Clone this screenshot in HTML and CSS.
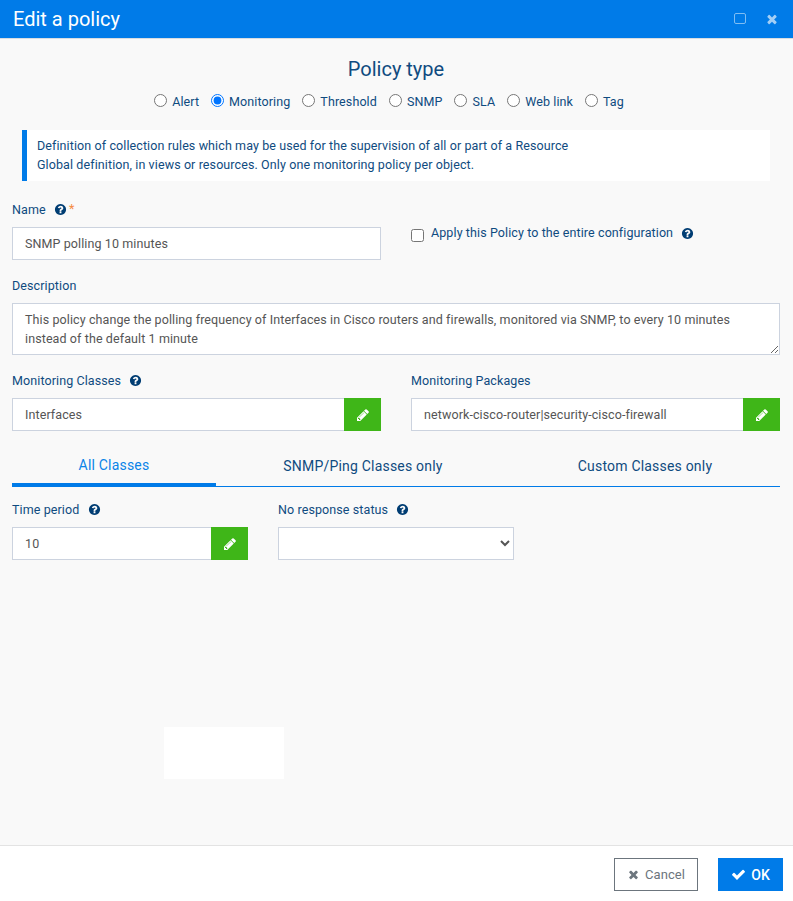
FILE: index.html
```html
<!DOCTYPE html>
<html lang="en">
<head>
  <meta charset="UTF-8">
  <meta name="viewport" content="width=device-width, initial-scale=1.0">
  <title>Edit a policy</title>
  <link rel="stylesheet" href="styles.css">
</head>
<body>
  <svg class="sprite" xmlns="http://www.w3.org/2000/svg">
    <symbol id="i-help" viewBox="0 0 1792 1792"><path d="M1024 1376v-192q0-14-9-23t-23-9h-192q-14 0-23 9t-9 23v192q0 14 9 23t23 9h192q14 0 23-9t9-23zm256-672q0-88-55.500-163t-138.500-116-170-41q-243 0-371 213-15 24 8 42l132 100q7 6 19 6 16 0 25-12 53-68 86-92 34-24 86-24 48 0 85.500 26t37.500 59q0 38-20 61t-68 45q-63 28-115.500 86.500t-52.500 125.500v36q0 14 9 23t23 9h192q14 0 23-9t9-23q0-19 21.500-49.500t54.500-49.500q32-18 49-28.500t46-35 44.500-48 28-60.500 12.500-81zm384 192q0 209-103 385.500t-279.500 279.500-385.500 103-385.500-103-279.500-279.500-103-385.500 103-385.500 279.500-279.500 385.500-103 385.500 103 279.500 279.500 103 385.500z"/></symbol>
    <symbol id="i-pencil" viewBox="0 0 1792 1792"><path d="M491 1536l91-91-235-235-91 91v107h128v128h107zm523-928q0-22-22-22-10 0-17 7l-542 542q-7 7-7 17 0 22 22 22 10 0 17-7l542-542q7-7 7-17zm-54-192l416 416-832 832h-416v-416zm683 96q0 53-37 90l-166 166-416-416 166-165q36-38 90-38 53 0 91 38l235 234q37 39 37 91z"/></symbol>
    <symbol id="i-times" viewBox="0 0 1792 1792"><path d="M1490 1322q0 40-28 68l-136 136q-28 28-68 28t-68-28l-294-294-294 294q-28 28-68 28t-68-28l-136-136q-28-28-28-68t28-68l294-294-294-294q-28-28-28-68t28-68l136-136q28-28 68-28t68 28l294 294 294-294q28-28 68-28t68 28l136 136q28 28 28 68t-28 68l-294 294 294 294q28 28 28 68z"/></symbol>
    <symbol id="i-check" viewBox="0 0 1792 1792"><path d="M1671 566q0 40-28 68l-724 724-136 136q-28 28-68 28t-68-28l-136-136-362-362q-28-28-28-68t28-68l136-136q28-28 68-28t68 28l294 295 656-657q28-28 68-28t68 28l136 136q28 28 28 68z"/></symbol>
  </svg>

  <div class="dialog">
    <div class="titlebar">
      <span class="titlebar-text">Edit a policy</span>
      <span class="titlebar-btns">
        <span class="btn-max"></span>
        <svg class="btn-close"><use href="#i-times"/></svg>
      </span>
    </div>

    <div class="content">
      <h2 class="type-title">Policy type</h2>
      <div class="type-row">
        <label class="type-opt"><input type="radio" name="type"> Alert</label>
        <label class="type-opt"><input type="radio" name="type" checked> Monitoring</label>
        <label class="type-opt"><input type="radio" name="type"> Threshold</label>
        <label class="type-opt"><input type="radio" name="type"> SNMP</label>
        <label class="type-opt"><input type="radio" name="type"> SLA</label>
        <label class="type-opt"><input type="radio" name="type"> Web link</label>
        <label class="type-opt"><input type="radio" name="type"> Tag</label>
      </div>

      <div class="notice">
        Definition of collection rules which may be used for the supervision of all or part of a Resource<br>
        Global definition, in views or resources. Only one monitoring policy per object.
      </div>

      <div class="row row-name">
        <div class="col">
          <div class="field-label">Name <svg class="help"><use href="#i-help"/></svg><span class="req">*</span></div>
          <input class="text-input" type="text" value="SNMP polling 10 minutes">
        </div>
        <div class="col apply">
          <input class="apply-check" type="checkbox">
          <span class="apply-text">Apply this Policy to the entire configuration</span>
          <svg class="help"><use href="#i-help"/></svg>
        </div>
      </div>

      <div class="field-label label-desc">Description</div>
      <textarea class="text-area">This policy change the polling frequency of Interfaces in Cisco routers and firewalls, monitored via SNMP, to every 10 minutes instead of the default 1 minute</textarea>

      <div class="row row-monitor">
        <div class="col">
          <div class="field-label">Monitoring Classes <svg class="help"><use href="#i-help"/></svg></div>
          <div class="input-group">
            <input class="text-input" type="text" value="Interfaces">
            <button class="edit-btn"><svg><use href="#i-pencil"/></svg></button>
          </div>
        </div>
        <div class="col">
          <div class="field-label">Monitoring Packages</div>
          <div class="input-group">
            <input class="text-input" type="text" value="network-cisco-router|security-cisco-firewall">
            <button class="edit-btn"><svg><use href="#i-pencil"/></svg></button>
          </div>
        </div>
      </div>

      <div class="tabs">
        <a class="tab active">All Classes</a>
        <a class="tab">SNMP/Ping Classes only</a>
        <a class="tab">Custom Classes only</a>
      </div>

      <div class="row-time">
        <div class="col-time">
          <div class="field-label">Time period <svg class="help"><use href="#i-help"/></svg></div>
          <div class="input-group">
            <input class="text-input" type="text" value="10">
            <button class="edit-btn"><svg><use href="#i-pencil"/></svg></button>
          </div>
        </div>
        <div class="col-status">
          <div class="field-label">No response status <svg class="help"><use href="#i-help"/></svg></div>
          <select class="select-input"><option></option></select>
        </div>
      </div>

      <div class="white-patch"></div>
    </div>

    <div class="footer">
      <button class="btn btn-cancel"><svg><use href="#i-times"/></svg>Cancel</button>
      <button class="btn btn-ok"><svg><use href="#i-check"/></svg>OK</button>
    </div>
  </div>
</body>
</html>
```

FILE: styles.css
```css
* {
  box-sizing: border-box;
}
html, body {
  height: 100%;
}
body {
  margin: 0;
  font-family: Roboto, "Liberation Sans", Arial, sans-serif;
  font-size: 12.5px;
  letter-spacing: 0.1px;
  color: #0f4b80;
  background: #fff;
  overflow: hidden;
}
.sprite {
  display: none;
}
.dialog {
  height: 100%;
  display: flex;
  flex-direction: column;
}
.titlebar {
  height: 39px;
  flex: none;
  padding: 0 14px 1px 13px;
  display: flex;
  align-items: center;
  justify-content: space-between;
  background: #007be8;
  border-bottom: 1px solid #d8dde2;
  color: #fff;
}
.titlebar-text {
  font-size: 20px;
  letter-spacing: 0;
}
.titlebar-btns {
  display: flex;
  align-items: center;
  gap: 19px;
}
.btn-max {
  width: 12px;
  height: 11px;
  border: 1.5px solid #7fbdf3;
  border-radius: 2px;
}
.btn-close {
  width: 14px;
  height: 14px;
  fill: #a3cff6;
}
.content {
  flex: 1;
  position: relative;
  padding: 0 13px 0 12px;
  background: #f9f9f9;
}
.type-title {
  margin: 18px 0 0;
  font-size: 20px;
  font-weight: 400;
  letter-spacing: 0;
  line-height: 24px;
  text-align: center;
}
.type-row {
  margin-top: 10px;
  height: 20px;
  padding-right: 14px;
  display: flex;
  justify-content: center;
  align-items: center;
  gap: 12px;
}
.type-opt {
  display: flex;
  align-items: center;
  gap: 5px;
  white-space: nowrap;
}
.type-opt input {
  margin: 0 0 2px;
  width: 13px;
  height: 13px;
}
.notice {
  margin: 19px 10px 0;
  height: 51px;
  padding: 6px 10px;
  line-height: 19px;
  background: #fff;
  border-left: 5px solid #007be8;
}
.row {
  display: grid;
  grid-template-columns: 369px 369px;
  column-gap: 30px;
}
.row-name {
  margin-top: 19px;
}
.field-label {
  height: 18px;
  margin-bottom: 9px;
  padding-top: 1px;
  line-height: 16px;
  display: flex;
  align-items: center;
  white-space: pre;
}
.help {
  width: 13px;
  height: 13px;
  margin-left: 5px;
  fill: #003d73;
}
.req {
  align-self: flex-start;
  margin-left: 2px;
  color: #f58a42;
}
.text-input {
  display: block;
  width: 100%;
  height: 33px;
  padding: 0 12px;
  border: 1px solid #ccd3df;
  background: #fff;
  color: #555;
  font: inherit;
  letter-spacing: inherit;
  outline: none;
}
.apply {
  display: flex;
  align-items: flex-start;
  padding-top: 25px;
}
.apply-check {
  margin: 4px 7px 0 0;
  width: 13px;
  height: 13px;
}
.apply-text {
  line-height: 16px;
}
.apply .help {
  margin: 2px 0 0 8px;
}
.label-desc {
  margin-top: 16px;
}
.text-area {
  display: block;
  width: 768px;
  height: 52px;
  padding: 6px 12px;
  margin-top: 0;
  border: 1px solid #ccd3df;
  background: #fff;
  color: #555;
  font: inherit;
  letter-spacing: inherit;
  line-height: 19px;
  outline: none;
}
.row-monitor {
  margin-top: 16px;
}
.input-group {
  display: flex;
}
.input-group .text-input {
  flex: 1;
  min-width: 0;
  border-right: 0;
}
.edit-btn {
  width: 37px;
  height: 33px;
  flex: none;
  padding: 0;
  border: 0;
  background: #3fb618;
  display: flex;
  align-items: center;
  justify-content: center;
}
.edit-btn svg {
  width: 14px;
  height: 14px;
  fill: #fff;
}
.tabs {
  margin-top: 18px;
  width: 768px;
  height: 38px;
  display: grid;
  grid-template-columns: 204px 294px 270px;
  border-bottom: 1px solid #007be8;
}
.tab {
  height: 37px;
  padding-top: 9px;
  text-align: center;
  font-size: 14px;
  letter-spacing: 0.2px;
  line-height: 16px;
}
.tab.active {
  padding-top: 8px;
  color: #0a84e8;
  border-bottom: 3px solid #007be8;
}
.row-time {
  margin-top: 13px;
  display: flex;
  gap: 30px;
}
.col-time {
  width: 236px;
}
.col-status {
  width: 236px;
}
.select-input {
  display: block;
  width: 100%;
  height: 33px;
  border: 1px solid #ccd3df;
  background: #fff;
  color: #555;
  font: inherit;
  outline: none;
}
.white-patch {
  position: absolute;
  left: 164px;
  top: 688px;
  width: 120px;
  height: 52px;
  background: #fff;
}
.footer {
  height: 56px;
  flex: none;
  padding: 12px 10px 10px 0;
  display: flex;
  justify-content: flex-end;
  gap: 20px;
  background: #fff;
  border-top: 1px solid #e3e3e3;
}
.btn {
  height: 33px;
  display: flex;
  align-items: center;
  justify-content: center;
  font: inherit;
  letter-spacing: inherit;
}
.btn-cancel {
  width: 84px;
  background: #fff;
  border: 1px solid #6c757d;
  color: #6c757d;
  font-size: 13px;
}
.btn-cancel svg {
  width: 13px;
  height: 13px;
  margin-right: 5px;
  fill: #6c757d;
}
.btn-ok {
  width: 65px;
  background: #007be8;
  border: 0;
  color: #fff;
  font-size: 14px;
  font-weight: 500;
}
.btn-ok svg {
  width: 15px;
  height: 15px;
  margin-right: 5px;
  fill: #fff;
}
```
